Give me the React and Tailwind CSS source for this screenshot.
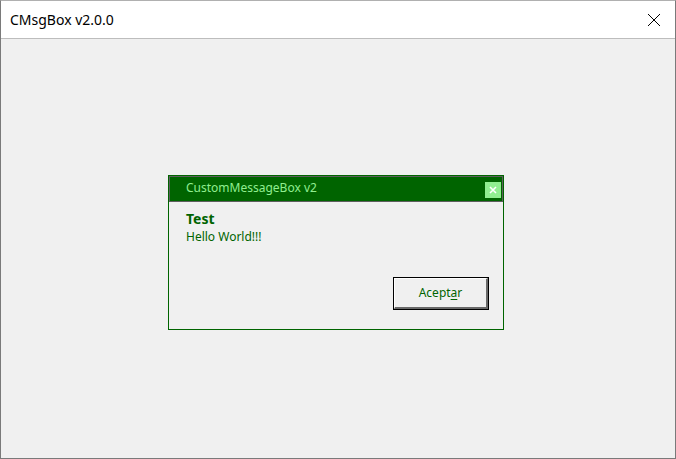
export default function App() {
  const font = { fontFamily: '"Noto Sans", "Open Sans", sans-serif' };
  return (
    <div className="w-[676px] h-[459px] flex flex-col bg-white border border-t-[#b0b0b0] border-[#7a7a7a]" style={font}>
      <div className="h-[38px] shrink-0 flex items-center justify-between bg-white border-b border-[#bdbdbd]">
        <span className="pl-[9px] text-[14px] text-black leading-none">CMsgBox v2.0.0</span>
        <div className="w-[42px] h-full flex items-center justify-center">
          <svg width="14" height="14" viewBox="0 0 14 14">
            <path d="M1 1 L13 13 M13 1 L1 13" stroke="#000" strokeWidth="1" fill="none" />
          </svg>
        </div>
      </div>
      <div className="flex-1 bg-[#f0f0f0] pt-[136px] pl-[167px]">
        <div className="w-[336px] h-[155px] border border-[#006400] flex flex-col bg-[#f0f0f0]">
          <div className="h-[26px] shrink-0 bg-[#006400] border border-[#5e5e5e] flex items-center justify-between">
            <span className="pl-[16px] text-[12px] text-[#90ee90] leading-none -mt-[3px]">CustomMessageBox v2</span>
            <div className="w-[16px] h-[16px] bg-[#90ee90] mr-[1px] mt-[2px] flex items-center justify-center">
              <svg width="8" height="8" viewBox="0 0 8 8">
                <path d="M1 1 L7 7 M7 1 L1 7" stroke="#ffffff" strokeWidth="1.6" fill="none" />
              </svg>
            </div>
          </div>
          <div className="flex flex-col pl-[17px] pt-[8px]">
            <span className="text-[14px] font-bold text-[#006400] leading-[18px]">Test</span>
            <span className="text-[12px] text-[#006400] leading-[16px] mt-[1px]">Hello World!!!</span>
          </div>
          <div className="flex justify-end pr-[14px] mt-[32px]">
            <div className="w-[96px] h-[33px] border border-black bg-[#f0f0f0] flex">
              <div className="flex-1 border-t border-l border-white border-r-2 border-b-2 border-r-[#696969] border-b-[#696969] flex items-center justify-center">
                <span className="text-[12px] text-[#006400] leading-none">Acept<span className="underline underline-offset-2">a</span>r</span>
              </div>
            </div>
          </div>
        </div>
      </div>
    </div>
  );
}
